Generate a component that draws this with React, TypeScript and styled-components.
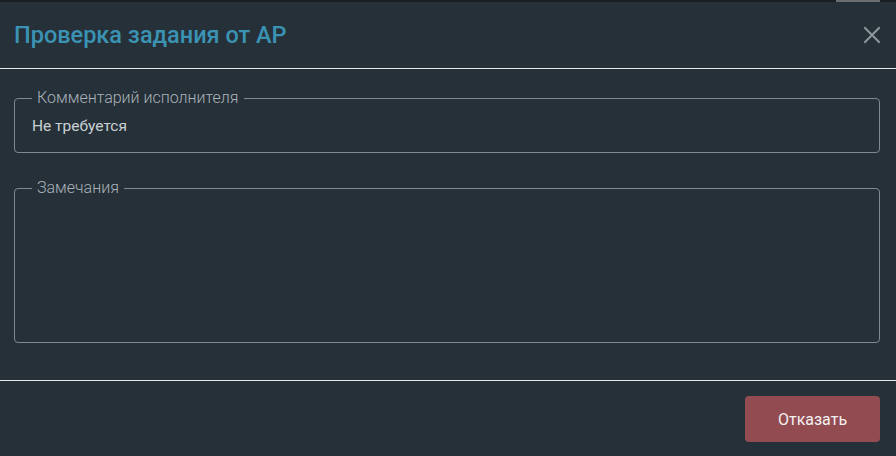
import styled, { createGlobalStyle } from 'styled-components';

const Global = createGlobalStyle`
  html, body {
    margin: 0;
    padding: 0;
    background: #1a1f24;
    font-family: Roboto, "Noto Sans", sans-serif;
  }
  * { box-sizing: border-box; }
`;

const TopStrip = styled.div`
  height: 2px;
  display: flex;
  justify-content: flex-end;
  padding-right: 16px;
`;

const Peek = styled.div`
  width: 44px;
  height: 2px;
  background: #6b6e70;
`;

const Modal = styled.div`
  background: #263038;
  height: 454px;
  display: flex;
  flex-direction: column;
`;

const Header = styled.div`
  height: 67px;
  display: flex;
  align-items: center;
  justify-content: space-between;
  padding: 0 14px 0 14px;
  border-bottom: 1px solid #e6e9eb;
`;

const Title = styled.h2`
  margin: 0;
  font-size: 23.5px;
  font-weight: 500;
  color: #3b93b3;
  padding-bottom: 1px;
`;

const CloseButton = styled.button`
  border: 0;
  background: none;
  padding: 0;
  width: 20px;
  height: 20px;
  display: flex;
  align-items: center;
  justify-content: center;
  cursor: pointer;
`;

const Body = styled.div`
  display: flex;
  flex-direction: column;
  gap: 26px;
  padding: 20px 16px 37px 14px;
  border-bottom: 1px solid #e6e9eb;
`;

const Field = styled.fieldset<{ tall?: boolean }>`
  margin: 0;
  padding: 0 17px 0 17px;
  border: 1px solid #7b8a95;
  border-radius: 4px;
  height: ${({ tall }) => (tall ? '164px' : '64px')};
`;

const Legend = styled.legend`
  padding: 0 5px;
  margin-left: 0;
  font-size: 16px;
  font-weight: 300;
  color: #a9b2b8;
  line-height: 18px;
`;

const Value = styled.div`
  font-size: 15.5px;
  line-height: 19px;
  color: #c9d0d4;
  padding-top: 10px;
`;

const Footer = styled.div`
  flex: 1;
  display: flex;
  justify-content: flex-end;
  align-items: flex-start;
  padding: 15px 16px 0 0;
`;

const RejectButton = styled.button`
  width: 135px;
  height: 46px;
  border: 0;
  border-radius: 4px;
  background: #924b51;
  color: #f4f1f1;
  font-family: Roboto, "Noto Sans", sans-serif;
  font-size: 16px;
  font-weight: 400;
  cursor: pointer;
`;

export default function App() {
  return (
    <>
      <Global />
      <TopStrip>
        <Peek />
      </TopStrip>
      <Modal>
        <Header>
          <Title>Проверка задания от АР</Title>
          <CloseButton aria-label="close">
            <svg width="18" height="18" viewBox="0 0 18 18">
              <path d="M2 2 L16 16 M16 2 L2 16" stroke="#8e979c" strokeWidth="2" strokeLinecap="square" />
            </svg>
          </CloseButton>
        </Header>
        <Body>
          <Field>
            <Legend>Комментарий исполнителя</Legend>
            <Value>Не требуется</Value>
          </Field>
          <Field tall>
            <Legend>Замечания</Legend>
          </Field>
        </Body>
        <Footer>
          <RejectButton>Отказать</RejectButton>
        </Footer>
      </Modal>
    </>
  );
}
